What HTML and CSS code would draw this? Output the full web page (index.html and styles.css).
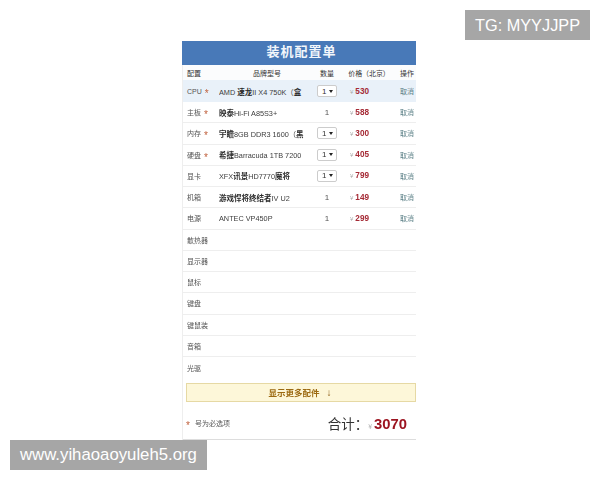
FILE: index.html
```html
<!DOCTYPE html>
<html lang="zh">
<head>
<meta charset="utf-8">
<title>装机配置单</title>
<link rel="stylesheet" href="styles.css">
</head>
<body>
<main class="panel">
  <h1 class="title">装机配置单</h1>
  <div class="row head"><span>配置</span><span class="c brand">品牌型号</span><span class="c">数量</span><span class="c pricehead">价格（北京）</span><span>操作</span></div>
  <div class="row hi"><span class="cat">CPU<i>*</i></span><span class="name">AMD <b>速龙</b>II X4 750K（<b>盒</b></span><span class="c"><span class="sel">1<em></em></span></span><span class="price"><small>¥</small>530</span><span class="op">取消</span></div>
  <div class="row"><span class="cat">主板<i>*</i></span><span class="name"><b>映泰</b>Hi-Fi A85S3+</span><span class="c">1</span><span class="price"><small>¥</small>588</span><span class="op">取消</span></div>
  <div class="row"><span class="cat">内存<i>*</i></span><span class="name"><b>宇瞻</b>8GB DDR3 1600（<b>黑</b></span><span class="c"><span class="sel">1<em></em></span></span><span class="price"><small>¥</small>300</span><span class="op">取消</span></div>
  <div class="row"><span class="cat">硬盘<i>*</i></span><span class="name"><b>希捷</b>Barracuda 1TB 7200</span><span class="c"><span class="sel">1<em></em></span></span><span class="price"><small>¥</small>405</span><span class="op">取消</span></div>
  <div class="row"><span class="cat">显卡</span><span class="name">XFX<b>讯景</b>HD7770<b>魔将</b></span><span class="c"><span class="sel">1<em></em></span></span><span class="price"><small>¥</small>799</span><span class="op">取消</span></div>
  <div class="row"><span class="cat">机箱</span><span class="name"><b>游戏悍将终结者</b>IV U2</span><span class="c">1</span><span class="price"><small>¥</small>149</span><span class="op">取消</span></div>
  <div class="row"><span class="cat">电源</span><span class="name">ANTEC VP450P</span><span class="c">1</span><span class="price"><small>¥</small>299</span><span class="op">取消</span></div>
  <div class="row"><span class="cat">散热器</span></div>
  <div class="row"><span class="cat">显示器</span></div>
  <div class="row"><span class="cat">鼠标</span></div>
  <div class="row"><span class="cat">键盘</span></div>
  <div class="row"><span class="cat">键鼠装</span></div>
  <div class="row"><span class="cat">音箱</span></div>
  <div class="row last"><span class="cat">光驱</span></div>
  <div class="more">显示更多配件<span class="arrow">↓</span></div>
  <div class="foot">
    <span class="note"><i>*</i>号为必选项</span>
    <span class="total">合计：<small>¥</small><strong>3070</strong></span>
  </div>
</main>
<div class="mark mark-tg">TG: MYYJJPP</div>
<div class="mark mark-url">www.yihaoaoyuleh5.org</div>
</body>
</html>
```
FILE: styles.css
```css
* { box-sizing: border-box; }
html, body { margin: 0; height: 100%; background: #fff; overflow: hidden; }
body {
  padding: 41px 0 0 182px;
  font-family: "Liberation Sans", "Noto Sans CJK SC", sans-serif;
  color: #444;
  position: relative;
}
.panel {
  width: 234px;
  border-left: 1px solid #eee;
  filter: blur(0.35px);
}
.title {
  margin: 0 0 0 -1px;
  height: 24px;
  padding: 0 0 2px 5px;
  background: #4879b8;
  color: #f2f6fb;
  font-size: 13px;
  font-weight: 700;
  line-height: 22px;
  text-align: center;
  letter-spacing: 1px;
}
.row {
  display: grid;
  grid-template-columns: 32px 91px 34px 56px 16px;
  align-items: center;
  height: 21.25px;
  padding-left: 4px;
  border-bottom: 1px solid #eee;
  font-size: 8px;
  color: #555;
  white-space: nowrap;
  overflow: hidden;
}
.head { height: 15px; color: #333; border-bottom: 0; font-size: 7px; background: #fbfcfd; }
.brand { padding-left: 5px; }
.pricehead { padding-right: 6px; letter-spacing: -0.1px; }
.hi { background: #e9f1f9; border-bottom: 0; height: 22px; }
.last { border-bottom: 0; }
.c { text-align: center; }
.cat { font-size: 7px; color: #555; }
.cat i, .note i {
  display: inline-block;
  color: #c0603c;
  font-style: normal;
  font-size: 10px;
  line-height: 8px;
  margin-left: 3px;
  transform: translateY(2.5px);
}
.name { font-size: 7.3px; color: #3d3d3d; overflow: hidden; }
.name b { color: #2a2a2a; font-size: 7.5px; }
.sel {
  display: inline-flex;
  align-items: center;
  justify-content: space-between;
  width: 20px;
  height: 12px;
  padding: 0 3px 0 4px;
  background: #fff;
  border: 1px solid #ccc;
  border-radius: 2px;
  color: #333;
}
.sel em {
  border-top: 3px solid #222;
  border-left: 2px solid transparent;
  border-right: 2px solid transparent;
}
.price { padding-left: 6px; font-size: 8.2px; font-weight: 700; color: #a52a35; }
.price small { font-size: 6px; font-weight: 400; color: #aaa; margin-right: 2px; }
.op { font-size: 7px; color: #5d8188; }
.more {
  margin: 4.5px 0 0 3px;
  height: 19px;
  padding-right: 2px;
  background: #fdf7d9;
  border: 1px solid #e6d9a4;
  color: #9c6a12;
  font-size: 8.5px;
  font-weight: 700;
  line-height: 17px;
  text-align: center;
}
.arrow { margin-left: 7px; font-size: 10px; color: #8a5a10; }
.foot {
  display: flex;
  align-items: center;
  justify-content: space-between;
  height: 38px;
  padding: 5px 9px 0 3px;
  border-bottom: 1px solid #ddd;
}
.note { font-size: 7px; color: #555; }
.note i { margin: 0 5px 0 0; }
.total {
  display: flex;
  align-items: baseline;
  font-family: "Noto Sans CJK TC", serif;
  font-size: 13.5px;
  color: #333;
}
.total small { font-size: 7px; color: #aaa; margin: 0 2px 0 0; }
.total strong { font-family: "Liberation Sans", sans-serif; font-size: 14.8px; color: #9c1420; }
.mark {
  position: absolute;
  height: 30px;
  background: #a6a6a6;
  color: #fff;
  font-family: "Liberation Sans", sans-serif;
  line-height: 30px;
  padding: 0 10px;
}
.mark-tg { top: 10px; right: 10px; font-size: 16.3px; }
.mark-url { left: 10px; top: 440px; font-size: 16.75px; }
```
